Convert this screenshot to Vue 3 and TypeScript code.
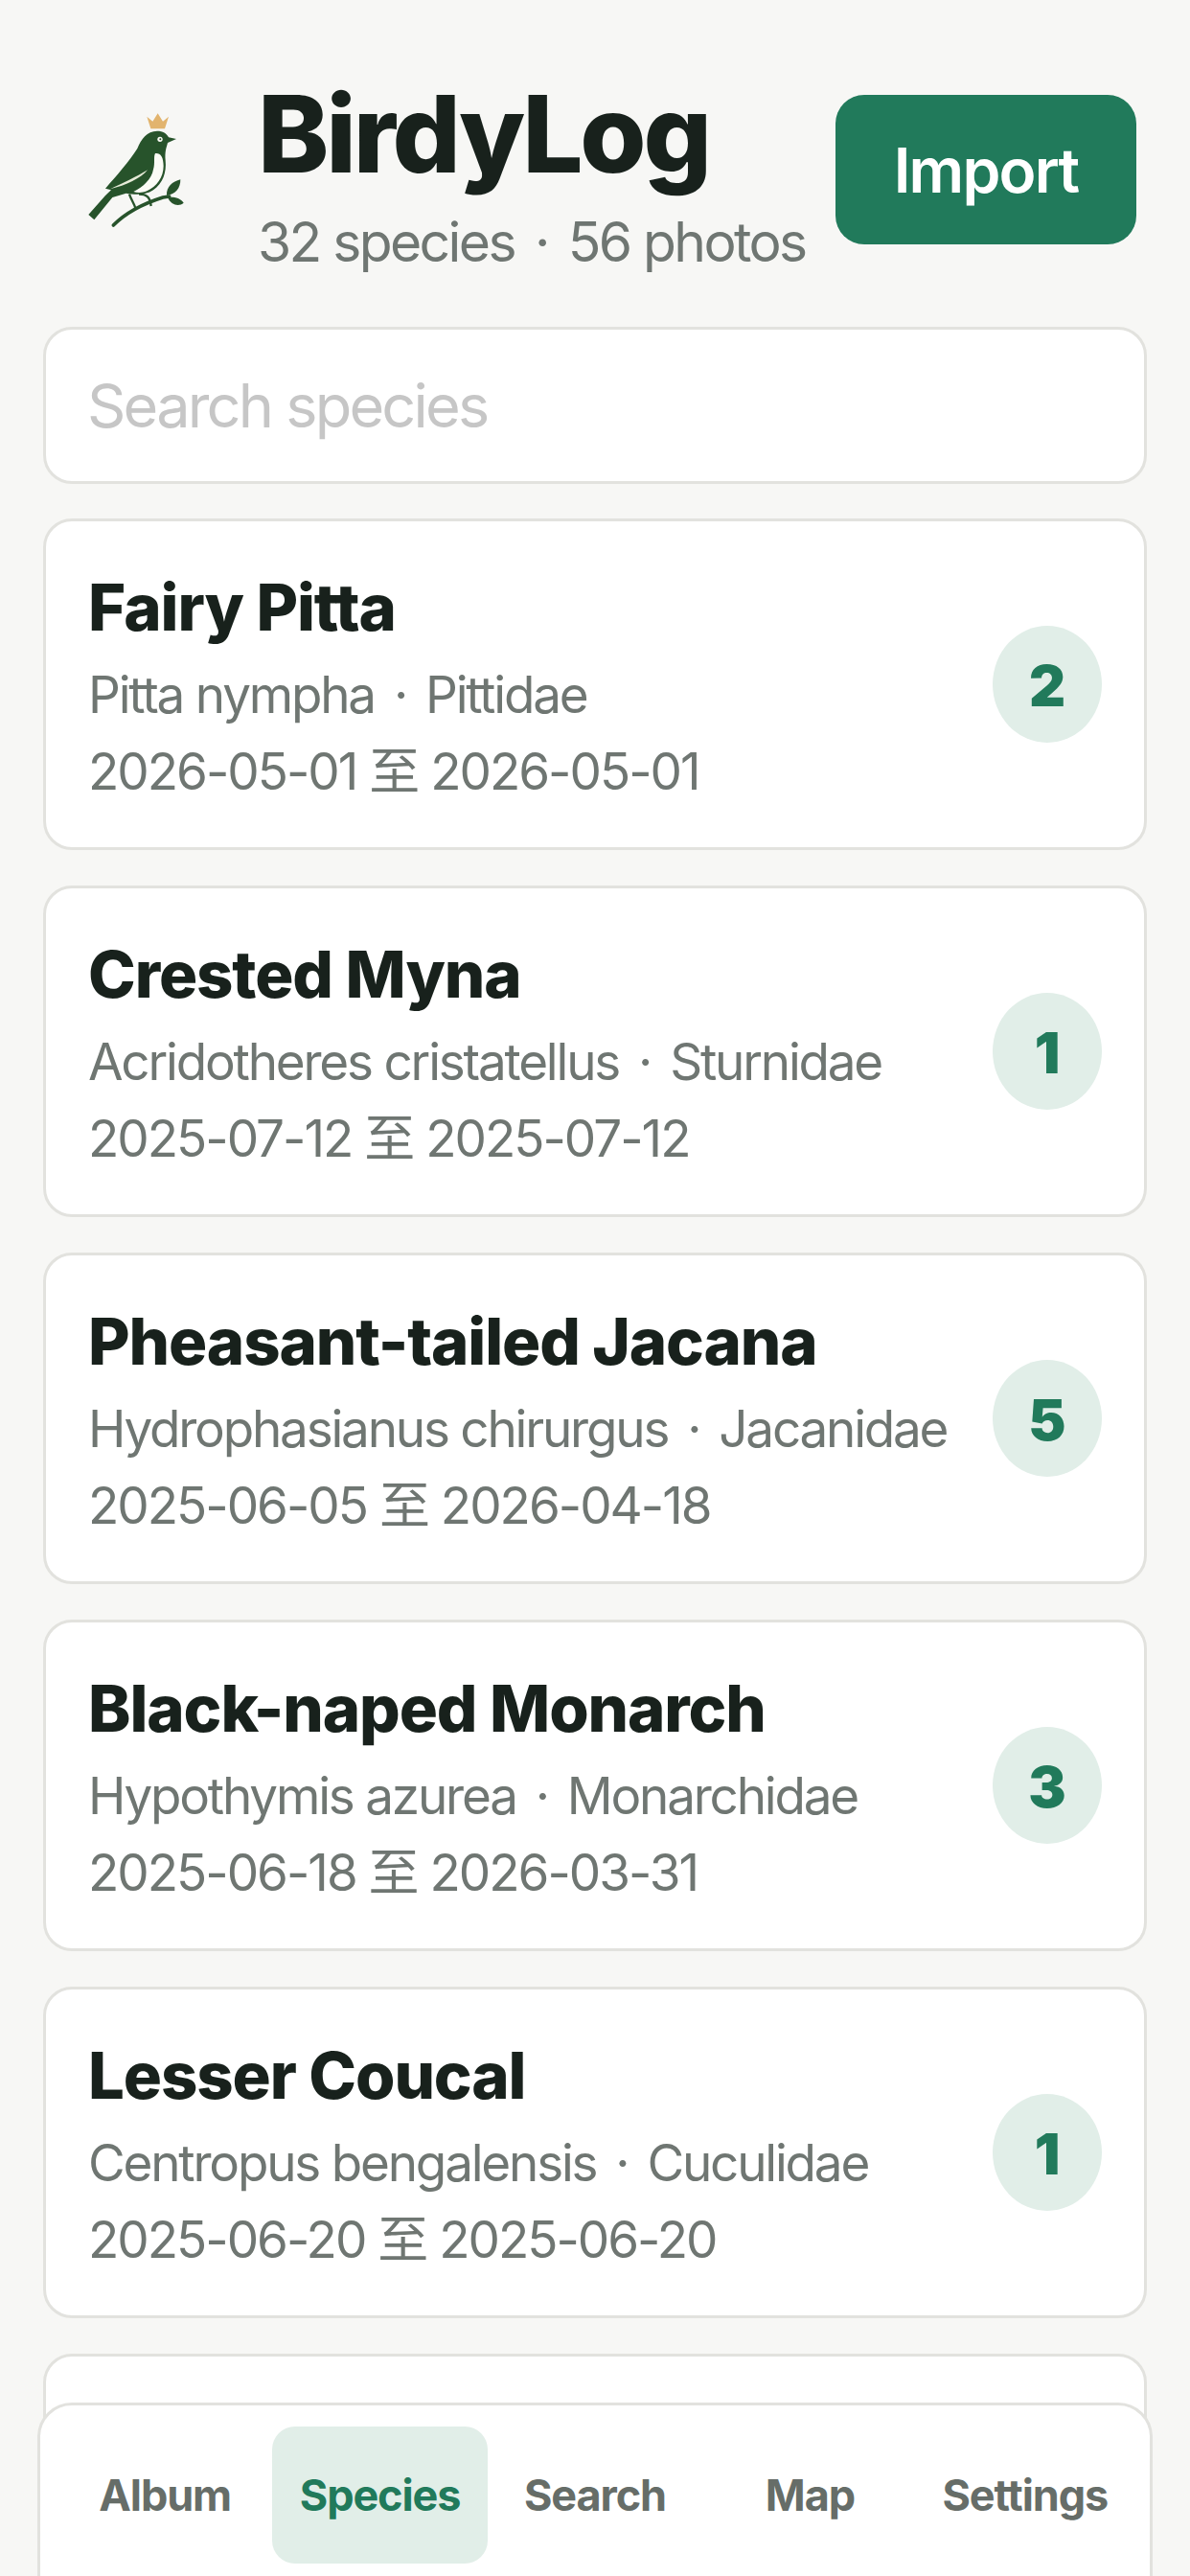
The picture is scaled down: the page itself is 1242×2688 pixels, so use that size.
<script setup lang="ts">
interface Species {
  name: string
  latin: string
  family: string
  from: string
  to: string
  count: number
}

const species: Species[] = [
  { name: 'Fairy Pitta', latin: 'Pitta nympha', family: 'Pittidae', from: '2026-05-01', to: '2026-05-01', count: 2 },
  { name: 'Crested Myna', latin: 'Acridotheres cristatellus', family: 'Sturnidae', from: '2025-07-12', to: '2025-07-12', count: 1 },
  { name: 'Pheasant-tailed Jacana', latin: 'Hydrophasianus chirurgus', family: 'Jacanidae', from: '2025-06-05', to: '2026-04-18', count: 5 },
  { name: 'Black-naped Monarch', latin: 'Hypothymis azurea', family: 'Monarchidae', from: '2025-06-18', to: '2026-03-31', count: 3 },
  { name: 'Lesser Coucal', latin: 'Centropus bengalensis', family: 'Cuculidae', from: '2025-06-20', to: '2025-06-20', count: 1 },
]

const tabs = ['Album', 'Species', 'Search', 'Map', 'Settings']
</script>

<template>
  <div class="page">
    <header class="header">
      <svg class="logo" viewBox="0 0 480 540" aria-hidden="true">
        <path d="M292 163 L280 125 L298 140 L314 115 L330 140 L348 125 L336 163 Z" fill="#e2b46e" />
        <path d="M175 465 C215 425 260 400 330 378 L350 375" fill="none" stroke="#27532b" stroke-width="11" stroke-linecap="round" />
        <path d="M342 372 C340 345 360 328 385 322 C385 350 370 368 342 372 Z" fill="#27532b" />
        <path d="M345 378 C360 375 385 378 395 395 C380 408 355 402 345 378 Z" fill="#27532b" />
        <path d="M225 368 C230 385 240 395 245 415 M255 368 C280 368 290 378 293 405" fill="none" stroke="#27532b" stroke-width="7" />
        <path d="M312 170 C330 170 342 178 348 190 L372 195 L345 207 C340 225 336 235 338 262 C342 300 330 335 300 355 C275 372 240 370 215 365 L172 378 L115 448 L97 432 L150 372 L168 355 L150 350 C185 310 225 265 250 225 C262 195 280 170 312 170 Z" fill="#27532b" />
        <path d="M306 240 C322 238 332 250 332 280 C332 315 310 345 280 358 C265 364 250 364 238 360 C268 345 295 320 300 290 C306 270 300 250 306 240 Z" fill="#fbfbf6" />
        <path d="M165 352 C200 335 250 312 282 292 C262 318 215 340 165 352 Z" fill="#e6ebd8" />
        <circle cx="321" cy="196" r="8" fill="#fbfbf6" />
        <circle cx="322" cy="196" r="3" fill="#27532b" />
      </svg>
      <div class="brand">
        <h1 class="title">BirdyLog</h1>
        <p class="stats">32 species<span class="dot">·</span>56 photos</p>
      </div>
      <button class="import" type="button">Import</button>
    </header>

    <input class="search" type="text" placeholder="Search species" />

    <ul class="list">
      <li v-for="item in species" :key="item.name" class="card">
        <div class="info">
          <div class="name">{{ item.name }}</div>
          <div class="meta">{{ item.latin }}<span class="dot">·</span>{{ item.family }}</div>
          <div class="dates">{{ item.from }} 至 {{ item.to }}</div>
        </div>
        <div class="count">{{ item.count }}</div>
      </li>
      <li class="card"></li>
    </ul>

    <nav class="nav">
      <div v-for="tab in tabs" :key="tab" class="tab" :class="{ active: tab === 'Species' }">{{ tab }}</div>
    </nav>
  </div>
</template>

<style>
html, body {
  margin: 0;
  background: #f7f7f5;
}
</style>

<style scoped>
.page {
  position: relative;
  box-sizing: border-box;
  width: 1242px;
  height: 2688px;
  overflow: hidden;
  padding: 80px 45px 0;
  background: #f7f7f5;
  font-family: Inter, "Noto Sans CJK SC", sans-serif;
  color: #18211c;
}
.header {
  display: flex;
  align-items: flex-start;
  height: 180px;
  padding: 0 11px 0 15px;
  margin-bottom: 81px;
}
.logo {
  width: 160px;
  height: 180px;
  flex: none;
  margin-right: 49px;
}
.brand {
  flex: 1;
  min-width: 0;
}
.title {
  margin: 0;
  font-size: 112px;
  line-height: 119px;
  font-weight: 800;
  letter-spacing: -3.2px;
}
.stats {
  margin: 21px 0 0;
  font-size: 57px;
  line-height: 66px;
  letter-spacing: -2.6px;
  color: #6f7672;
  white-space: nowrap;
}
.stats .dot {
  margin: 0 21px;
}
.import {
  flex: none;
  box-sizing: border-box;
  width: 314px;
  height: 156px;
  margin-top: 19px;
  border: none;
  border-radius: 30px;
  background: #217a5b;
  color: #fff;
  font: 600 64px Inter, sans-serif;
  letter-spacing: -1.8px;
}
.search {
  display: block;
  box-sizing: border-box;
  width: 100%;
  height: 164px;
  padding: 0 43px;
  border: 3px solid #e2e2de;
  border-radius: 30px;
  background: #fff;
  font: 400 63px Inter, sans-serif;
  letter-spacing: -2.8px;
  outline: none;
}
.search::placeholder {
  color: #c6c6c6;
  opacity: 1;
}
.list {
  list-style: none;
  margin: 36px 0 0;
  padding: 0;
  display: flex;
  flex-direction: column;
  gap: 37px;
}
.card {
  box-sizing: border-box;
  height: 346px;
  flex: none;
  display: flex;
  align-items: center;
  justify-content: space-between;
  padding: 0 44px 0 44px;
  border: 3px solid #e2e2de;
  border-radius: 30px;
  background: #fff;
}
.info {
  min-width: 0;
  padding-top: 5px;
}
.name {
  font-size: 67px;
  line-height: 80px;
  font-weight: 800;
  letter-spacing: -1.1px;
}
.meta,
.dates {
  font-size: 53px;
  line-height: 68px;
  color: #6f7672;
  white-space: nowrap;
}
.meta {
  margin-top: 17px;
  letter-spacing: -2.2px;
}
.meta .dot {
  margin: 0 20px;
}
.dates {
  margin-top: 12px;
  letter-spacing: -2px;
}
.count {
  flex: none;
  box-sizing: border-box;
  width: 114px;
  height: 122px;
  padding-top: 3px;
  border-radius: 50%;
  background: #e1eee8;
  color: #217a5b;
  display: flex;
  align-items: center;
  justify-content: center;
  font-size: 59px;
  font-weight: 900;
}
.nav {
  position: absolute;
  left: 39px;
  right: 39px;
  top: 2507px;
  height: 220px;
  box-sizing: border-box;
  padding: 22px 18px 0;
  display: grid;
  grid-template-columns: repeat(5, 1fr);
  align-items: start;
  gap: 0;
  border: 3px solid #e2e2de;
  border-radius: 36px;
  background: #fff;
}
.tab {
  height: 143px;
  display: flex;
  align-items: center;
  justify-content: center;
  border-radius: 24px;
  font-size: 45px;
  font-weight: 700;
  letter-spacing: -1.1px;
  color: #666d68;
}
.tab.active {
  background: #e1eee8;
  color: #217a5b;
}
</style>
